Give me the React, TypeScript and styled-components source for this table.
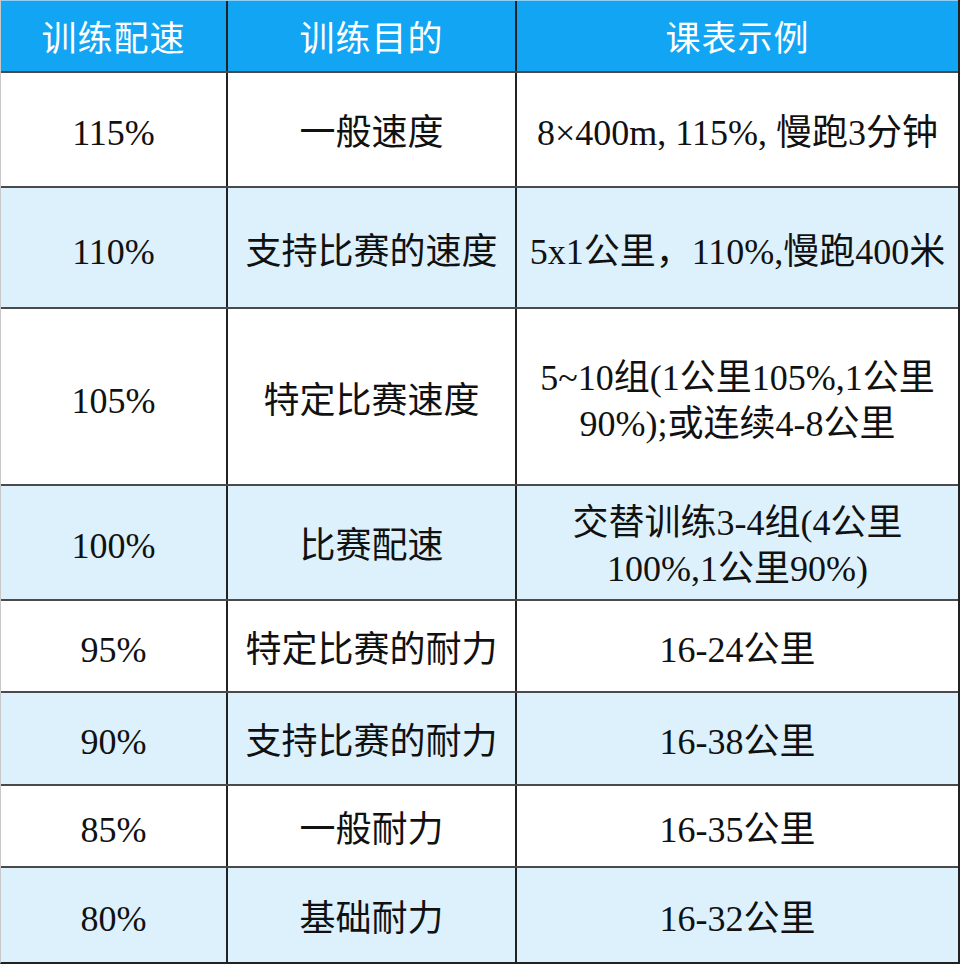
import React from "react";
import styled, { createGlobalStyle } from "styled-components";

const GlobalStyle = createGlobalStyle`
  html, body {
    margin: 0;
    padding: 0;
    background: #ffffff;
  }
`;

type RowData = {
  pace: string;
  goal: string;
  example: string[];
  height: number;
  shaded: boolean;
};

const rows: RowData[] = [
  { pace: "115%", goal: "一般速度", example: ["8×400m, 115%, 慢跑3分钟"], height: 115, shaded: false },
  { pace: "110%", goal: "支持比赛的速度", example: ["5x1公里，110%,慢跑400米"], height: 122, shaded: true },
  { pace: "105%", goal: "特定比赛速度", example: ["5~10组(1公里105%,1公里", "90%);或连续4-8公里"], height: 177, shaded: false },
  { pace: "100%", goal: "比赛配速", example: ["交替训练3-4组(4公里", "100%,1公里90%)"], height: 115, shaded: true },
  { pace: "95%", goal: "特定比赛的耐力", example: ["16-24公里"], height: 92, shaded: false },
  { pace: "90%", goal: "支持比赛的耐力", example: ["16-38公里"], height: 94, shaded: true },
  { pace: "85%", goal: "一般耐力", example: ["16-35公里"], height: 82, shaded: false },
  { pace: "80%", goal: "基础耐力", example: ["16-32公里"], height: 94, shaded: true },
];

export default function App() {
  return (
    <>
      <GlobalStyle />
      <Table>
        <HeaderRow>
          <HeadCell>训练配速</HeadCell>
          <HeadCell>训练目的</HeadCell>
          <HeadCell>课表示例</HeadCell>
        </HeaderRow>
        {rows.map((r) => (
          <Row key={r.pace} $h={r.height} $shaded={r.shaded}>
            <Cell>{r.pace}</Cell>
            <Cell>{r.goal}</Cell>
            <Cell>
              {r.example.map((line) => (
                <Line key={line}>{line}</Line>
              ))}
            </Cell>
          </Row>
        ))}
      </Table>
    </>
  );
}

const Table = styled.div`
  width: 960px;
  height: 964px;
  box-sizing: border-box;
  display: flex;
  flex-direction: column;
  border-left: 1px solid #c8c8c8;
  border-right: 2px solid #222;
  border-bottom: 2px solid #222;
`;

const HeaderRow = styled.div`
  display: grid;
  grid-template-columns: 227px 289px 1fr;
  height: 73px;
  box-sizing: border-box;
  background: #11a5f3;
  border-top: 1px solid #8fd0f5;
  border-bottom: 2px solid #4a4a4a;
`;

const Row = styled.div<{ $h: number; $shaded: boolean }>`
  display: grid;
  grid-template-columns: 227px 289px 1fr;
  height: ${({ $h }) => $h}px;
  box-sizing: border-box;
  background: ${({ $shaded }) => ($shaded ? "#ddf1fd" : "#ffffff")};
  border-bottom: 2px solid #4a4a4a;
  &:last-child {
    border-bottom: none;
  }
`;

const HeadCell = styled.div`
  display: flex;
  align-items: center;
  justify-content: center;
  border-right: 2px solid #222;
  color: #ffffff;
  font-family: "Noto Sans CJK SC", sans-serif;
  font-size: 35px;
  letter-spacing: 1px;
  line-height: 1;
  &:last-child {
    border-right: none;
  }
`;

const Cell = styled.div`
  display: flex;
  flex-direction: column;
  align-items: center;
  justify-content: center;
  box-sizing: border-box;
  padding-top: 8px;
  border-right: 2px solid #222;
  color: #111;
  font-family: "Liberation Serif", "Noto Sans CJK SC", serif;
  font-size: 36px;
  line-height: 46px;
  white-space: nowrap;
  overflow: hidden;
  &:last-child {
    border-right: none;
  }
`;

const Line = styled.span`
  display: block;
`;
